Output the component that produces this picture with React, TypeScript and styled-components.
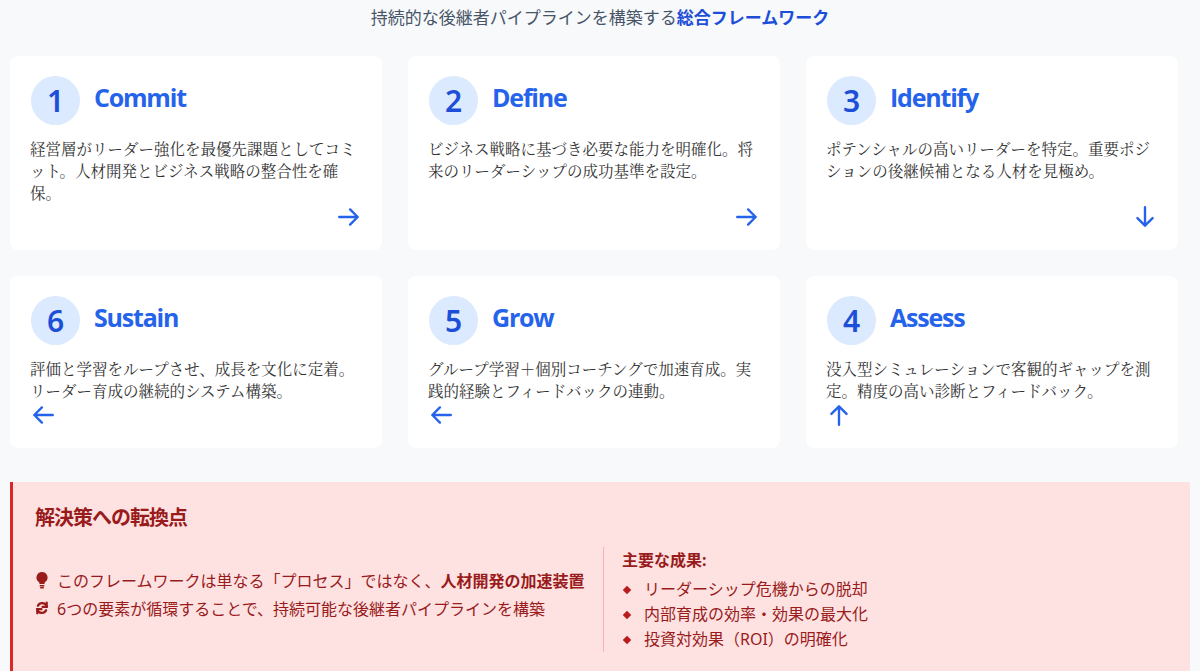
import React from 'react';
import styled, { createGlobalStyle } from 'styled-components';

const Global = createGlobalStyle`
  body { margin: 0; background: #f7f9fb; font-family: "Noto Sans", "Noto Sans CJK JP", sans-serif; }
`;

const steps = [
  { n: 1, t: 'Commit', d: '経営層がリーダー強化を最優先課題としてコミット。人材開発とビジネス戦略の整合性を確保。', a: 'right' },
  { n: 2, t: 'Define', d: 'ビジネス戦略に基づき必要な能力を明確化。将来のリーダーシップの成功基準を設定。', a: 'right' },
  { n: 3, t: 'Identify', d: 'ポテンシャルの高いリーダーを特定。重要ポジションの後継候補となる人材を見極め。', a: 'down' },
  { n: 6, t: 'Sustain', d: '評価と学習をループさせ、成長を文化に定着。リーダー育成の継続的システム構築。', a: 'left' },
  { n: 5, t: 'Grow', d: 'グループ学習＋個別コーチングで加速育成。実践的経験とフィードバックの連動。', a: 'left' },
  { n: 4, t: 'Assess', d: '没入型シミュレーションで客観的ギャップを測定。精度の高い診断とフィードバック。', a: 'up' },
];

const Arrow = ({ dir }: { dir: string }) => {
  const rot = { right: 0, down: 90, left: 180, up: 270 }[dir] ?? 0;
  return (
    <svg width="26" height="26" viewBox="0 0 24 24" fill="none" stroke="#2563eb" strokeWidth="2.2" strokeLinecap="round" strokeLinejoin="round" style={{ transform: `rotate(${rot}deg)` }}>
      <path d="M3 12h17M13 5l7 7-7 7" />
    </svg>
  );
};

export default function App() {
  return (
    <Page>
      <Global />
      <Heading>
        持続的な後継者パイプラインを構築する<strong>総合フレームワーク</strong>
      </Heading>
      <Grid>
        {steps.map((s) => (
          <Card key={s.n}>
            <CardHead>
              <Num>{s.n}</Num>
              <Title>{s.t}</Title>
            </CardHead>
            <Desc>{s.d}</Desc>
            <ArrowRow $align={s.a === 'right' || s.a === 'down' ? 'flex-end' : 'flex-start'}>
              <Arrow dir={s.a} />
            </ArrowRow>
          </Card>
        ))}
      </Grid>
      <Panel>
        <PanelTitle>解決策への転換点</PanelTitle>
        <PanelBody>
          <Left>
            <Item>
              <svg width="14" height="18" viewBox="0 0 14 18"><path d="M7 1a5.5 5.5 0 0 0-3.2 10c.5.4.7 1 .7 1.6V13h5v-.4c0-.6.2-1.2.7-1.6A5.5 5.5 0 0 0 7 1z" fill="#991b1b" /><rect x="4.5" y="14" width="5" height="1.5" rx=".7" fill="#991b1b" /><rect x="5" y="16" width="4" height="1.5" rx=".7" fill="#991b1b" /></svg>
              <span>このフレームワークは単なる「プロセス」ではなく、<b>人材開発の加速装置</b></span>
            </Item>
            <Item>
              <svg width="14" height="14" viewBox="0 0 24 24" fill="none" stroke="#991b1b" strokeWidth="4" strokeLinecap="round"><path d="M20 10a8 8 0 0 0-15-2M4 14a8 8 0 0 0 15 2" /><path d="M20 3v7h-7M4 21v-7h7" /></svg>
              <span>6つの要素が循環することで、持続可能な後継者パイプラインを構築</span>
            </Item>
          </Left>
          <Right>
            <SubTitle>主要な成果:</SubTitle>
            <Bullet>リーダーシップ危機からの脱却</Bullet>
            <Bullet>内部育成の効率・効果の最大化</Bullet>
            <Bullet>投資対効果（ROI）の明確化</Bullet>
          </Right>
        </PanelBody>
      </Panel>
    </Page>
  );
}

const Page = styled.div`
  padding: 4px 10px 6px;
`;

const Heading = styled.div`
  text-align: center;
  font-size: 17px;
  color: #475569;
  height: 30px;
  strong { color: #1d4ed8; font-weight: 700; }
`;

const Grid = styled.div`
  margin-top: 22px;
  display: grid;
  grid-template-columns: repeat(3, 372px);
  column-gap: 26px;
  row-gap: 26px;
`;

const Card = styled.div`
  background: #fff;
  border-radius: 8px;
  padding: 20px 20px 14px;
  display: flex;
  flex-direction: column;
  height: 194px;
  box-sizing: border-box;
  &:nth-child(n + 4) { height: 172px; }
`;

const CardHead = styled.div`
  display: flex;
  align-items: center;
  gap: 14px;
  margin-bottom: 12px;
`;

const Num = styled.div`
  width: 49px;
  height: 49px;
  border-radius: 50%;
  background: #dbeafe;
  color: #1d4ed8;
  font-size: 30px;
  font-weight: 600;
  display: flex;
  align-items: center;
  justify-content: center;
  margin-left: 1px;
`;

const Title = styled.div`
  font-family: "Open Sans", sans-serif;
  font-size: 25px;
  font-weight: 700;
  color: #2563eb;
  letter-spacing: -1.2px;
  margin-top: -8px;
`;

const Desc = styled.div`
  font-family: "Noto Serif CJK JP", "Liberation Serif", serif;
  font-size: 15.5px;
  line-height: 22px;
  color: #333;
`;

const ArrowRow = styled.div<{ $align: string }>`
  margin-top: auto;
  display: flex;
  justify-content: ${(p) => p.$align};
  margin-bottom: 6px;
`;

const Panel = styled.div`
  margin-top: 34px;
  background: #fee2e2;
  border-left: 3px solid #dc2626;
  padding: 20px 22px 20px;
`;

const PanelTitle = styled.div`
  font-size: 20px;
  font-weight: 700;
  color: #991b1b;
  margin-bottom: 16px;
  letter-spacing: -1px;
`;

const PanelBody = styled.div`
  display: grid;
  grid-template-columns: 568px 1fr;
`;

const Left = styled.div`
  display: flex;
  flex-direction: column;
  justify-content: center;
  gap: 4px;
  padding-bottom: 12px;
`;

const Item = styled.div`
  display: flex;
  align-items: center;
  gap: 8px;
  font-size: 16px;
  color: #991b1b;
  b { font-weight: 700; }
`;

const Right = styled.div`
  border-left: 1px solid #f5b5b5;
  padding-left: 18px;
  display: flex;
  flex-direction: column;
`;

const SubTitle = styled.div`
  font-weight: 700;
  color: #991b1b;
  font-size: 16px;
  margin-bottom: 6px;
`;

const Bullet = styled.div`
  color: #991b1b;
  font-size: 16px;
  line-height: 25px;
  display: flex;
  align-items: center;
  &::before {
    content: '';
    width: 6px;
    height: 6px;
    background: #b91c1c;
    transform: rotate(45deg);
    margin: 0 14px 0 2px;
  }
`;
